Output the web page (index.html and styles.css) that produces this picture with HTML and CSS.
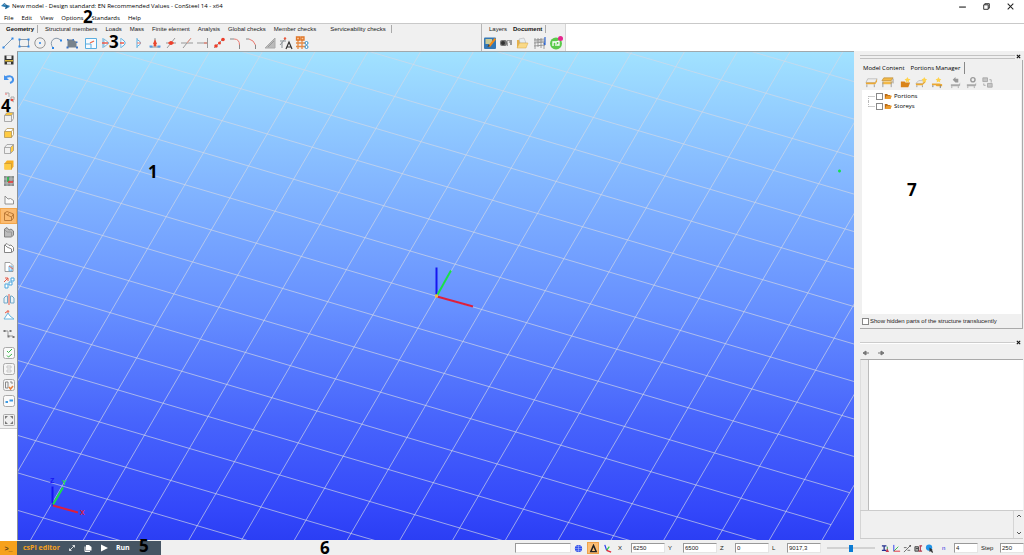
FILE: index.html
```html
<!DOCTYPE html>
<html lang="en">
<head>
<meta charset="utf-8">
<title>New model - ConSteel 14</title>
<link rel="stylesheet" href="styles.css">
</head>
<body>
<div class="app">
  <header class="titlebar">
    <svg class="logo" viewBox="0 0 10 8"><path d="M0 4L4 0.5V2.500L9.500 3.500V5L5 7.500V5.500Z" fill="#2f7fb5"/><path d="M4 1L7 4L5 7" stroke="#1a4c74" fill="none"/></svg>
    <h1 class="title">New model - Design standard: EN Recommended Values - ConSteel 14 - x64</h1>
    <div class="window-buttons">
      <button aria-label="Minimize"><svg viewBox="0 0 8 8"><path d="M1 4.500H7" stroke="#222"/></svg></button>
      <button aria-label="Restore"><svg viewBox="0 0 8 8"><path d="M1.500 2.500H5.500V6.500H1.500ZM2.500 2.500V1.500H6.500V5.500H5.500" fill="none" stroke="#222" stroke-width=".8"/></svg></button>
      <button aria-label="Close"><svg viewBox="0 0 8 8"><path d="M1.500 1.500L6.500 6.500M6.500 1.500L1.500 6.500" stroke="#222" stroke-width=".9"/></svg></button>
    </div>
  </header>
  <nav class="menubar">
    <button>File</button><button>Edit</button><button>View</button><button>Options</button><button>Standards</button><button>Help</button>
    <span class="callout callout-2">2</span>
  </nav>
  <div class="ribbon">
    <section class="ribbon-main">
      <div class="tabs">
        <button class="tab active">Geometry</button><button class="tab">Structural members</button><button class="tab">Loads</button><button class="tab">Mass</button><button class="tab">Finite element</button><button class="tab">Analysis</button><button class="tab">Global checks</button><button class="tab">Member checks</button><button class="tab last">Serviceability checks</button>
      </div>
      <div class="tools">
        <div class="group">
          <button aria-label="Line"><svg viewBox="0 0 14 14"><path d="M3 11L11 3" stroke="#7d98b3"/><path d="M1.500 10.500h2v2h-2zM10.500 1.500h2v2h-2z" fill="#2c86e8"/></svg></button>
          <button aria-label="Rectangle"><svg viewBox="0 0 14 14"><path d="M2.500 3.500H11.500V10.500H2.500Z" fill="none" stroke="#8a9aaa"/><path d="M1.500 2.500h2v2h-2zM10.500 2.500h2v2h-2zM1.500 9.500h2v2h-2zM10.500 9.500h2v2h-2z" fill="#2c86e8"/></svg></button>
          <button aria-label="Circle"><svg viewBox="0 0 14 14"><circle cx="7" cy="7" r="5.200" fill="none" stroke="#8a8a8a" stroke-width=".9"/><circle cx="7" cy="7" r="1" fill="#2c86e8"/></svg></button>
          <button aria-label="Arc"><svg viewBox="0 0 14 14"><path d="M4 12Q0.500 7 4 3.500Q8 0.500 12 4.500" fill="none" stroke="#8a9aaa"/><path d="M3 11h2v2h-2zM11 3.500h2v2h-2z" fill="#2c86e8"/></svg></button>
          <button aria-label="Plate"><svg viewBox="0 0 14 14"><path d="M2.500 3.500H8L11.500 6V11.500H2.500Z" fill="#77828c"/><path d="M2 3h1.500v1.500H2zM7.500 3h1.500v1.500H7.500zM11 5.500h1.500v1.500H11zM1.500 10.500h2v2h-2zM11 10.500h2v2h-2z" fill="#3a75c8"/></svg></button>
        </div>
        <div class="group">
          <button aria-label="Frame"><svg viewBox="0 0 14 14"><path d="M1.500 2.500H12.500V12.500H1.500Z" fill="#f7fbff" stroke="#5aaee0"/><path d="M2 8H7V12M2 8" fill="none" stroke="#5aaee0"/><path d="M6 7L10 5" stroke="#ed6a48" stroke-width="1.300"/></svg></button>
          <button aria-label="Mirror start"><svg viewBox="0 0 14 14"><path d="M3 2V12" stroke="#5aaee0"/><path d="M4 3L9 7L4 11Z" fill="#fff" stroke="#7eb8d8"/><path d="M2 7H8" stroke="#ed5a48" stroke-width="1.500"/></svg></button>
          <button aria-label="Mirror end"><svg viewBox="0 0 14 14"><path d="M5 2V12" stroke="#5aaee0"/><path d="M5.500 3Q13 7 5.500 11" fill="#fff" stroke="#5aaee0"/><path d="M4 7H8" stroke="#ed5a48" stroke-width="1.500"/></svg></button>
          <button aria-label="Half section"><svg viewBox="0 0 14 14"><path d="M5 2V12M5 3.500Q12 7 5 10.500" fill="#fff" stroke="#5aaee0"/><path d="M5 7H9" stroke="#ed7a68"/></svg></button>
        </div>
        <div class="group joined">
          <button aria-label="Split node"><svg viewBox="0 0 14 14"><path d="M2 11H12M7 2V8" stroke="#899"/><path d="M7 3L5 8H9Z" fill="#e9482e"/><path d="M1.500 9.500h3v2h-3zM9.500 9.500h3v2h-3z" fill="#5b9be0"/><circle cx="7" cy="9" r="1.500" fill="#e9482e"/></svg></button>
          <button aria-label="Intersect"><svg viewBox="0 0 14 14"><path d="M2 7H12M3 12L11 2" stroke="#999"/><path d="M4 7H10" stroke="#f06a55" stroke-width="1.500"/><circle cx="7" cy="7" r="2" fill="#ed3d2a"/></svg></button>
          <button aria-label="Trim"><svg viewBox="0 0 14 14"><path d="M1 7H13M3 12L11 2" stroke="#999"/><path d="M7 7L11 2" stroke="#ef9a88"/></svg></button>
          <button aria-label="Extend"><svg viewBox="0 0 14 14"><path d="M1 7H11M11.500 2V12" stroke="#999"/><path d="M8 7H11" stroke="#f06a55"/></svg></button>
          <button aria-label="Divide"><svg viewBox="0 0 14 14"><path d="M2 12L12 2" stroke="#999"/><circle cx="4" cy="10" r="1.800" fill="#ed3d2a"/><circle cx="7.500" cy="7" r="1.500" fill="#ed3d2a"/><circle cx="11" cy="3.500" r="1.800" fill="#ed3d2a"/></svg></button>
          <button aria-label="Fillet"><svg viewBox="0 0 14 14"><path d="M2 3H6M11.500 8V13" stroke="#888"/><path d="M6 3Q11.500 3 11.500 9" fill="none" stroke="#e87a70"/></svg></button>
          <button aria-label="Chamfer"><svg viewBox="0 0 14 14"><path d="M2 3H5M11.500 9V13" stroke="#888"/><path d="M5 3L9 5L11.500 9" fill="none" stroke="#e87a70"/></svg></button>
        </div>
        <div class="group">
          <button aria-label="Slope"><svg viewBox="0 0 14 14"><path d="M2 12L12 2V12Z" fill="#bbb" stroke="#aaa"/><path d="M5 11L11 5" stroke="#999"/></svg></button>
          <button aria-label="Annotate"><svg viewBox="0 0 14 14"><path d="M1 9L6 3M3 12L3 6M1 5H7" stroke="#8b9297"/><circle cx="6" cy="2.500" r="1.200" fill="#e95a40"/><path d="M7 13L10 6L13 13M8 11H12" fill="none" stroke="#333" stroke-width="1.200"/></svg></button>
          <button aria-label="Raster grid"><svg viewBox="0 0 14 14"><path d="M3 4V13M7 4V13M1 7H11M1 10.500H11" stroke="#e58b45" stroke-width="1.300"/><path d="M1.500 1h3v3h-3zM6 1h3v3h-3z" fill="#f8c79c" stroke="#e07628" stroke-width="1.300"/><circle cx="11.500" cy="7" r="1.500" fill="#fff" stroke="#318fcb"/><circle cx="11.500" cy="11" r="1.500" fill="#fff" stroke="#318fcb"/></svg></button>
        </div>
      </div>
      <span class="callout callout-3">3</span>
    </section>
    <section class="ribbon-doc">
      <div class="tabs">
        <button class="tab">Layers</button><button class="tab active">Document</button>
      </div>
      <div class="tools">
        <div class="group">
          <button aria-label="Edit document"><svg viewBox="0 0 14 14"><rect x="1" y="1.500" width="12" height="11.500" rx="1" fill="#3477b4"/><path d="M2.500 3H9V8H2.500Z" fill="#c9ca96"/><path d="M5 10L11.500 2L13 3.500L7 11Z" fill="#f28b18"/><path d="M4.500 11L5.500 8.500L7 10Z" fill="#443"/></svg></button>
          <button aria-label="Snapshot"><svg viewBox="0 0 14 14"><rect x="1" y="4" width="7" height="6" rx="2" fill="#777"/><circle cx="4" cy="7" r="2" fill="#333"/><path d="M8 4H13V9H11V7H9V10H8Z" fill="#999"/><circle cx="9.500" cy="6" r="1" fill="#eee"/></svg></button>
          <button aria-label="Open folder"><svg viewBox="0 0 14 14"><path d="M2 4H6L7 6H11V12H2Z" fill="#e4b04d"/><path d="M4 3L9 2L11 7H5Z" fill="#e7edf2" stroke="#aaa" stroke-width=".5"/><path d="M2 12L4.500 7H13L11 12Z" fill="#f9d988" stroke="#dba941" stroke-width=".5"/></svg></button>
        </div>
        <div class="group">
          <button aria-label="Structure"><svg viewBox="0 0 14 14"><path d="M2 2V13M5 2V11M8 2V12M11 4V13M1 4L12 3M1 7L12 6M1 10L12 9M3 5H10" stroke="#888" stroke-width=".8"/><path d="M12 1V9L11 7" fill="none" stroke="#2c66d5" stroke-width="1.200"/></svg></button>
          <button aria-label="License"><svg viewBox="0 0 14 14"><circle cx="7" cy="7.500" r="6" fill="#5bc94b"/><path d="M4 10V6H7V10M7 6L10 5V9H8" fill="none" stroke="#fff" stroke-width="1.300"/><circle cx="11.500" cy="2.500" r="2.500" fill="#e5258e"/></svg></button>
        </div>
      </div>
    </section>
  </div>

  <main class="workspace">
    <aside class="sidebar">
      <div class="side-tools">
        <div class="side-group">
          <button aria-label="Save"><svg viewBox="0 0 14 14"><path d="M2.500 2.500H11.500V11.500H2.500Z" fill="#333"/><path d="M4.500 2.500H9.500V6H4.500Z" fill="#eee"/><path d="M3 7H11V8.500H3Z" fill="#d9b536"/><path d="M5 9H9V11.500H5Z" fill="#ddd"/></svg></button>
        </div>
        <div class="side-group">
          <button aria-label="Undo"><svg viewBox="0 0 14 14"><path d="M3 5.500Q10 2.500 11 7Q11.500 10 8 11" fill="none" stroke="#4492ec" stroke-width="2"/><path d="M2 3V8H7Z" fill="#4492ec"/></svg></button>
        </div>
        <div class="side-group">
          <button aria-label="Snap"><svg viewBox="0 0 14 14"><path d="M3 2H7V6M7 8L12 11M9 6H12V9H9Z" fill="none" stroke="#aaa"/><circle cx="10" cy="9" r="1.300" fill="#e95044"/><circle cx="4" cy="3" r="1" fill="#e99"/></svg></button>
        </div>
        <div class="side-group">
          <button aria-label="Wireframe top"><svg viewBox="0 0 14 14"><path d="M2.500 5.500L5 2.500H11.500L9.500 5.500Z" fill="#fbc53c"/><path d="M2.500 5.500H9.500V11.500H2.500ZM2.500 5.500L5 2.500H11.500V8.500L9.500 11.500M9.500 5.500L11.500 2.500" fill="none" stroke="#999" stroke-width=".8"/></svg></button>
          <button aria-label="Front view"><svg viewBox="0 0 14 14"><path d="M2.500 5.500L5 2.500H11.500V8.500L9.500 11.500H2.500Z" fill="#fff"/><path d="M2.500 5.500H9.500V11.500H2.500Z" fill="#ffcb42"/><path d="M2.500 5.500H9.500V11.500H2.500ZM2.500 5.500L5 2.500H11.500V8.500L9.500 11.500M9.500 5.500L11.500 2.500" fill="none" stroke="#b39453" stroke-width=".8"/></svg></button>
          <button aria-label="Side view"><svg viewBox="0 0 14 14"><path d="M8.500 5.500L11.500 2.500V8.500L8.500 11.500Z" fill="#ffcb42"/><path d="M2.500 5.500H8.500V11.500H2.500ZM2.500 5.500L5 2.500H11.500V8.500L8.500 11.500M8.500 5.500L11.500 2.500" fill="none" stroke="#999" stroke-width=".8"/></svg></button>
          <button aria-label="Solid view"><svg viewBox="0 0 14 14"><path d="M2.500 5.500L5 2.500H11.500V8.500L9.500 11.500H2.500Z" fill="#f6ae22"/><path d="M2.500 5.500H9.500V11.500H2.500Z" fill="#ffcb42"/><path d="M2.500 5.500H9.500V11.500" fill="none" stroke="#c99a3a" stroke-width=".8"/></svg></button>
          <button aria-label="Work plane"><svg viewBox="0 0 14 14"><path d="M2 2H12V12H2Z" fill="#8b9190"/><path d="M2 5H12M2 9H12M5 2V12M9 2V12" stroke="#c5c8c8" stroke-width=".7"/><path d="M6 3V8" stroke="#18b83c" stroke-width="1.500"/><path d="M6 8H11" stroke="#e33" stroke-width="1.500"/></svg></button>
        </div>
        <div class="side-group">
          <button aria-label="Outline"><svg viewBox="0 0 14 14"><path d="M3 3V11H11.500V7.500L8.500 5.500L6 6Z" fill="#fafafa" stroke="#888" stroke-width=".9"/></svg></button>
          <button class="on" aria-label="Hidden line"><svg viewBox="0 0 14 14"><path d="M2.500 4V11.500H9.500V8L5 6ZM2.500 4L5 2.500L11.500 5V9L9.500 11.500M5 6L7 4.500M9.500 8L11.500 5" fill="none" stroke="#b67432" stroke-width=".9"/></svg></button>
          <button aria-label="Shaded"><svg viewBox="0 0 14 14"><path d="M2.500 4L5 2.500L7 5L9 4L11.500 6V10L9.500 12H2.500Z" fill="#bbb" stroke="#777" stroke-width=".9"/><path d="M3 5L5 7H9.500V12" fill="none" stroke="#999"/></svg></button>
          <button aria-label="Solid outline"><svg viewBox="0 0 14 14"><path d="M2.500 4L5 2.500L7 4.500L9 4L11.500 6.500V10L9.500 11.500H2.500ZM3 4L5 6L9.500 8V11" fill="#fff" stroke="#777" stroke-width=".9"/></svg></button>
        </div>
        <div class="side-group">
          <button aria-label="Copy"><svg viewBox="0 0 14 14"><path d="M3 2.500H8L11 5.500V11.500H3Z" fill="#fff" stroke="#888" stroke-width=".8"/><path d="M7 11V6H10V11Z" fill="#cfe6f8" stroke="#5baee3" stroke-width=".8"/><path d="M7 6L11 9" stroke="#e86a55"/></svg></button>
          <button aria-label="Rotate"><svg viewBox="0 0 14 14"><path d="M3 8H6V12H3ZM7 6H10V9H7ZM9 2H12V5H9Z" fill="#fff" stroke="#4ba6df"/><path d="M2 6L6 2M6 2V5M6 2H3" stroke="#e65a48"/></svg></button>
          <button aria-label="Mirror"><svg viewBox="0 0 14 14"><path d="M2 11V6L4 4H5.500V11ZM12 11V6L10 4H8.500V11Z" fill="#e8f2f8" stroke="#72a8c8"/><path d="M7 2V13" stroke="#e65a48"/></svg></button>
          <button aria-label="Scale"><svg viewBox="0 0 14 14"><path d="M2 11L6 5L8 8L12 11Z" fill="#fff" stroke="#69b5df"/><path d="M3 5L6 3" stroke="#e65a48"/><circle cx="6" cy="3.500" r="1.300" fill="#e87967"/></svg></button>
        </div>
        <div class="side-group">
          <button aria-label="Path"><svg viewBox="0 0 14 14"><path d="M3 4H6V9H11" fill="none" stroke="#999"/><path d="M1.500 3h2v2h-2zM7.500 3h2v2h-2zM10.500 9h2v2h-2zM5.500 8.500h2v2h-2z" fill="#777"/></svg></button>
        </div>
        <div class="side-group">
          <button aria-label="Accept"><svg viewBox="0 0 14 14"><rect x="1.500" y="1.500" width="11" height="11" rx="2" fill="#fafafa" stroke="#aaa"/><path d="M5 5L6.500 6.500L10 3M5 9.500L6.500 11L10 8" fill="none" stroke="#39b649"/></svg></button>
          <button aria-label="Clear"><svg viewBox="0 0 14 14"><rect x="1.500" y="1.500" width="11" height="11" rx="2" fill="#f5f5f5" stroke="#aaa"/><path d="M5 4H9V6H5ZM5 8H9V10H5Z" fill="none" stroke="#c7c7c7"/></svg></button>
          <button aria-label="Filter"><svg viewBox="0 0 14 14"><rect x="1.500" y="1.500" width="11" height="11" rx="2" fill="#f5f5f5" stroke="#aaa"/><path d="M3.500 4H6V10H3.500ZM8 4H10V6" fill="none" stroke="#888"/><path d="M7 9L8.500 11L11 8" fill="none" stroke="#e8813c" stroke-width="1.500"/></svg></button>
          <button aria-label="Replace"><svg viewBox="0 0 14 14"><rect x="1.500" y="1.500" width="11" height="11" rx="2" fill="#fafafa" stroke="#aaa"/><path d="M3.500 8H6M7.500 6.500H11" stroke="#3c9ae2" stroke-width="2"/></svg></button>
        </div>
        <div class="side-group">
          <button aria-label="Zoom extents"><svg viewBox="0 0 14 14"><rect x="1.500" y="1.500" width="11" height="11" rx="1" fill="#eee" stroke="#aaa"/><path d="M3 3h3l-3 3zM11 3v3l-3-3zM3 11v-3l3 3zM11 11h-3l3-3z" fill="#777"/></svg></button>
        </div>
      </div>
      <span class="callout callout-4">4</span>
    </aside>

    <section class="viewport">
      <svg class="scene" viewBox="0 0 836 489" preserveAspectRatio="xMidYMid slice">
        <g transform="matrix(45.050 13.250 18.650 -32 418.500 244.700)">
          <path class="grid-line" d="M-10 -10V10M-9 -10V10M-8 -10V10M-7 -10V10M-6 -10V10M-5 -10V10M-4 -10V10M-3 -10V10M-2 -10V10M-1 -10V10M0 -10V10M1 -10V10M2 -10V10M3 -10V10M4 -10V10M5 -10V10M6 -10V10M7 -10V10M8 -10V10M9 -10V10M10 -10V10"/>
          <path class="grid-line" d="M-10 -10H10M-10 -9H10M-10 -8H10M-10 -7H10M-10 -6H10M-10 -5H10M-10 -4H10M-10 -3H10M-10 -2H10M-10 -1H10M-10 0H10M-10 1H10M-10 2H10M-10 3H10M-10 4H10M-10 5H10M-10 6H10M-10 7H10M-10 8H10M-10 9H10M-10 10H10"/>
        </g>
        <path class="axis-z" d="M418.500 243V216"/>
        <path class="axis-y" d="M419 244L433 219"/>
        <path class="axis-x" d="M419 245L455 255"/>
        <rect x="417" y="243" width="3" height="3" fill="#f4b942"/>
        <path class="axis-z" d="M34.500 454V435"/>
        <path class="axis-y" d="M35 453L45 436"/>
        <path class="axis-x" d="M35 454L60 461"/>
        <text class="axis-name name-z" x="32" y="431">Z</text>
        <text class="axis-name name-y" x="44" y="433">Y</text>
        <text class="axis-name name-x" x="62" y="463">X</text>
        <path d="M820 119.500H823M821.500 118V121" stroke="#16e04a" stroke-width="1.500"/>
      </svg>
      <span class="callout callout-1">1</span>
    </section>

    <aside class="docks">
      <section class="dock dock-top">
        <div class="grip double"><i></i><button aria-label="Close panel"><svg viewBox="0 0 6 6"><path d="M1 1L5 5M5 1L1 5" stroke="#111" stroke-width="1.300"/></svg></button></div>
        <div class="panel">
          <div class="dock-tabs"><button>Model Content</button><button class="current">Portions Manager</button></div>
          <div class="dock-tools">
            <button aria-label="Show portion"><svg viewBox="0 0 14 14"><path d="M3 3H13L11 7H1Z" fill="#eee" stroke="#aaa" stroke-width=".7"/><path d="M1 7H11L13 3V6L11 9H1Z" fill="#eba832"/><path d="M2 9V12M10 9V12" stroke="#999"/></svg></button>
            <button aria-label="Show all"><svg viewBox="0 0 14 14"><path d="M3 2H13L11 5H1Z" fill="#f3b947" stroke="#b98a34" stroke-width=".7"/><path d="M2 6H13L11 9H1Z" fill="#f3b947"/><path d="M2 6V12M11 6V12M13 3V8" stroke="#999"/></svg></button>
            <button class="gap" aria-label="New folder"><svg viewBox="0 0 14 14"><path d="M2 6H6L7 7H12L10 12H2Z" fill="#d98419"/><path d="M9 1L10 3L12.500 3.500L10.500 5L11 7L9 6L7 7L7.500 5L6 3.500L8 3Z" fill="#ffd34e"/></svg></button>
            <button aria-label="New portion"><svg viewBox="0 0 14 14"><path d="M1 8L4 5H11L8 8Z" fill="#eee" stroke="#aaa" stroke-width=".7"/><path d="M1 8H8L11 5V7L8 10H1Z" fill="#eba832"/><path d="M2 10V12M8 10V12" stroke="#999"/><path d="M10 1L11 3L13 3.500L11.500 5L12 7L10 6L8 7L8.500 5L7 3.500L9 3Z" fill="#ffd34e"/></svg></button>
            <button aria-label="New storey"><svg viewBox="0 0 14 14"><path d="M1 8H9L12 9V11H6L5 10H1Z" fill="#eba832"/><path d="M2 10V12M10 10V13" stroke="#777"/><path d="M8 1L9 3L11 3.500L9.500 5L10 7L8 6L6 7L6.500 5L5 3.500L7 3Z" fill="#ffd34e"/></svg></button>
            <button class="gap" aria-label="Restore portion"><svg viewBox="0 0 14 14"><path d="M2 9H11L12 7V10L11 11H2Z" fill="#aaa"/><path d="M4 4L7 1V3H10V7H7V5V7Z" fill="#999"/><path d="M3 11V13M10 11V13" stroke="#aaa"/></svg></button>
            <button aria-label="Portion settings"><svg viewBox="0 0 14 14"><path d="M2 9H11L12 7V10L11 11H2Z" fill="#aaa"/><circle cx="8.500" cy="4" r="2.300" fill="none" stroke="#999" stroke-width="1.500"/><path d="M3 11V13M10 11V13" stroke="#aaa"/></svg></button>
            <button aria-label="Arrange"><svg viewBox="0 0 14 14"><path d="M2 2H7V6H2ZM7 8H12V12H7Z" fill="#c5c5c5" stroke="#aaa"/><path d="M9 4H11V7M3 8V10H5" fill="none" stroke="#aaa"/></svg></button>
          </div>
          <ul class="tree">
            <li><label><input type="checkbox"><svg viewBox="0 0 10 8"><path d="M1 1H4L5 2H8V7H1Z" fill="#b96a15"/><path d="M1 7L3 3H10L8 7Z" fill="#ea9a2e"/></svg>Portions</label></li>
            <li><label><input type="checkbox"><svg viewBox="0 0 10 8"><path d="M1 1H4L5 2H8V7H1Z" fill="#b96a15"/><path d="M1 7L3 3H10L8 7Z" fill="#ea9a2e"/></svg>Storeys</label></li>
          </ul>
          <label class="show-hidden"><input type="checkbox">Show hidden parts of the structure translucently</label>
          <span class="callout callout-7">7</span>
        </div>
      </section>
      <section class="dock dock-bottom">
        <div class="grip"><i></i><button aria-label="Close panel"><svg viewBox="0 0 6 6"><path d="M1 1L5 5M5 1L1 5" stroke="#111" stroke-width="1.300"/></svg></button></div>
        <div class="history">
          <button aria-label="Back"><svg viewBox="0 0 8 8"><path d="M1 4L4 2V6ZM3 4H7" fill="#777" stroke="#777"/></svg></button>
          <button aria-label="Forward"><svg viewBox="0 0 8 8"><path d="M7 4L4 2V6ZM5 4H1" fill="#777" stroke="#777"/></svg></button>
        </div>
        <div class="properties"></div>
        <div class="message">
          <div class="message-text"></div>
          <div class="scroller">
            <button aria-label="Scroll up"><svg viewBox="0 0 6 6"><path d="M1 4L3 2L5 4" fill="none" stroke="#555"/></svg></button>
            <button aria-label="Scroll down"><svg viewBox="0 0 6 6"><path d="M1 2L3 4L5 2" fill="none" stroke="#555"/></svg></button>
          </div>
        </div>
      </section>
    </aside>
  </main>

  <footer class="statusbar">
    <button class="console">&gt;_</button>
    <div class="editor">
      <span class="editor-name">csPI editor</span>
      <button aria-label="Expand"><svg viewBox="0 0 8 8"><path d="M1.500 6.500L6.500 1.500M4.500 1.500H6.500V3.500M1.500 4.500V6.500H3.500" fill="none" stroke="#fff" stroke-width=".8"/></svg></button>
      <button aria-label="Open script"><svg viewBox="0 0 8 8"><path d="M2 1H5L7.500 3V6.500H2Z" fill="#fff"/><path d="M1 2.500V7.500H6" fill="none" stroke="#fff"/></svg></button>
      <button aria-label="Play"><svg viewBox="0 0 8 8"><path d="M1 0.500L8 4L1 7.500Z" fill="#fff"/></svg></button>
      <button class="run">Run</button>
      <span class="callout callout-5">5</span>
    </div>
    <div class="hint"><span class="callout callout-6">6</span></div>
    <div class="coords">
      <input class="command" type="text" aria-label="Command">
      <button aria-label="Global"><svg viewBox="0 0 10 10"><circle cx="5" cy="5" r="4" fill="#2444e8"/><path d="M1 5H9M5 1V9M2 3H8M2 7H8" stroke="#b6c6ff" stroke-width=".6"/></svg></button>
      <button class="delta" aria-label="Relative"><svg viewBox="0 0 10 10"><path d="M2 8.500H8L5 1.500Z" fill="none" stroke="#222" stroke-width="1.600"/></svg></button>
      <button aria-label="Axes"><svg viewBox="0 0 10 10"><path d="M2 1L4 7" stroke="#2337ee" stroke-width="1.300"/><path d="M4 7L7 3" stroke="#26c946" stroke-width="1.300"/><path d="M4 7L9 9" stroke="#e32636" stroke-width="1.500"/></svg></button>
      <label for="cx">X</label><input id="cx" type="text" value="6250">
      <label for="cy">Y</label><input id="cy" type="text" value="6500">
      <label for="cz">Z</label><input id="cz" type="text" value="0">
      <label for="cl">L</label><input id="cl" type="text" value="9017,3">
      <input class="zoom" type="range" min="0" max="100" value="50" aria-label="Zoom">
      <div class="snaps">
        <button aria-label="Section snap"><svg viewBox="0 0 10 10"><path d="M1 2H6M3.500 2V7M1 7H6" stroke="#23308f" stroke-width="1.400"/><path d="M7 3V7" stroke="#2a9b48"/><path d="M5 9L7 5L9 9Z" fill="#c83a54"/></svg></button>
        <button aria-label="Local axes"><svg viewBox="0 0 10 10"><path d="M2 1V8" stroke="#2337ee"/><path d="M2 8L7 3" stroke="#26b946"/><path d="M2 8H9" stroke="#e32636"/></svg></button>
        <button aria-label="Line snap"><svg viewBox="0 0 10 10"><path d="M1 9L8 2M1 4H4M5 7H8" stroke="#666"/><circle cx="8" cy="2" r="1" fill="#444"/></svg></button>
        <button aria-label="Model snap"><svg viewBox="0 0 10 10"><path d="M1 3H5V8H1ZM2 5H5" fill="#aaa" stroke="#444"/><path d="M7 2V8M5 8H9M6 2H9" stroke="#b3364a" stroke-width="1.300"/></svg></button>
        <button aria-label="Pick"><svg viewBox="0 0 10 10"><circle cx="4.500" cy="4" r="3.500" fill="#2395e8"/><path d="M5 4V9L6.500 8L8 10L9 9L7.500 7H9Z" fill="#333"/></svg></button>
      </div>
      <label class="count" for="n">n</label><input id="n" class="narrow" type="text" value="4">
      <label class="step" for="step">Step</label><input id="step" class="narrow" type="text" value="250">
    </div>
  </footer>
</div>
</body>
</html>
```

FILE: styles.css
```css
* { box-sizing: border-box; }
body {
  margin: 0;
  font: 6px/8px "Liberation Sans", Arial, sans-serif;
  color: #222;
  background: #fff;
}
button {
  display: flex;
  align-items: center;
  justify-content: center;
  flex: none;
  padding: 0;
  border: 0;
  background: none;
  color: inherit;
  font: inherit;
  white-space: nowrap;
}
svg { display: block; flex: none; }
.app { display: flex; flex-direction: column; height: 100vh; }

/* Title and menu */
.titlebar, .menubar, .dock-tabs, .tree { font: 6px/8px "Open Sans", sans-serif; color: #000; }
.titlebar { display: flex; align-items: center; height: 12px; padding: 0 9px 0 1px; gap: 2px; }
.logo { width: 9px; height: 8px; }
.title { margin: 0; font: inherit; }
.window-buttons { display: flex; gap: 15px; margin-left: auto; }
.window-buttons svg { width: 9px; height: 9px; }
.menubar { position: relative; display: flex; align-items: center; height: 11px; padding-left: 4px; gap: 8px; }

/* Ribbon */
.ribbon { display: flex; height: 28px; border-top: 1px solid #c9c9c9; }
.ribbon-main { position: relative; flex: 0 1 482px; background: #f0f0f0; border-right: 1px solid #b5b5b5; }
.ribbon-doc { background: #f0f0f0; border-right: 1px solid #d5d5d5; padding-right: 1px; }
.tabs { display: flex; align-items: center; height: 12px; padding: 0 0 2px 1px; }
.tab { height: 8px; padding: 0 4px; }
.ribbon-doc .tab { padding-left: 6px; }
.tab.active { font-weight: bold; color: #111; padding: 0 3px 0 5px; border-right: 1px solid #aaa; margin-right: 3px; }
.ribbon-doc .tab.active { padding-left: 2px; }
.tab.last { padding: 0 5px 0 10px; border-right: 1px solid #aaa; }
.tools { display: flex; height: 14px; gap: 3px; }
.ribbon-doc .tools { gap: 2px; }
.group { display: flex; }
.group.joined { margin-left: -3px; }
.group button { width: 16px; height: 14px; }
.group svg { width: 14px; height: 14px; }

/* Workspace */
.workspace { display: flex; flex: 1; min-height: 0; background: #f0f0f0; }
.sidebar { position: relative; flex: none; width: 17px; background: #fff; }
.side-tools { display: flex; flex-direction: column; gap: 3px; padding: 1px 0 0; background: #f0f0f0; border-bottom: 1px solid #ccc; }
.side-group button { width: 17px; height: 16px; }
.side-group svg { width: 14px; height: 14px; }
.side-group .on { background: #fbbb70; outline: 1px solid #f3a64c; outline-offset: -1px; }
.viewport {
  position: relative;
  flex: 1;
  min-width: 0;
  margin-bottom: 1px;
  border-top: 1px solid #a0a8ac;
  border-left: 1px solid #8c9298;
  background: linear-gradient(#a1e2ff 0%, #85b9ff 25%, #668fff 53%, #4865fc 75%, #3347fa 94%, #2b3ef4 100%);
  overflow: hidden;
}
.scene { width: 100%; height: 100%; }
.grid-line { fill: none; stroke: rgba(213, 217, 229, .66); stroke-width: 1px; vector-effect: non-scaling-stroke; }
.axis-x, .axis-y, .axis-z { fill: none; stroke-width: 2px; }
.axis-x { stroke: #dd1f3d; }
.axis-y { stroke: #18e047; }
.axis-z { stroke: #1616f0; }
.axis-name { font: bold 7px "Liberation Sans", Arial, sans-serif; }
.name-x { fill: #dd1f3d; }
.name-y { fill: #18e047; }
.name-z { fill: #1616f0; }

/* Docked panels */
.docks { display: flex; flex-direction: column; flex: 0 0 170px; padding: 2px 1px 2px 6px; }
.dock { display: flex; flex-direction: column; min-height: 0; }
.dock-top { flex: 286 1 0; }
.dock-bottom { flex: 200 1 0; }
.grip { display: flex; align-items: center; height: 7px; flex: none; gap: 1px; padding-right: 2px; }
.grip i { flex: 1; height: 2px; background: #ccc; border-bottom: 1px solid #fff; }
.grip.double i { height: 4px; background: none; border: 1px solid #c2c2c2; border-width: 1px 0; }
.grip svg { width: 5px; height: 5px; }
.panel { position: relative; display: flex; flex-direction: column; flex: 1; min-height: 0; margin-bottom: 10px; padding: 2px 1px 0 2px; border: 1px solid #aaa; border-width: 0 1px 1px 0; }
.dock-tabs { display: flex; align-items: center; height: 12px; gap: 6px; padding-left: 1px; }
.dock-tabs .current { padding-right: 4px; border-right: 1px solid #888; height: 12px; }
.dock-tools { display: flex; align-items: center; height: 16px; padding: 2px 0; }
.dock-tools button { width: 16px; padding-left: 2px; }
.dock-tools .gap { margin-left: 2px; }
.dock-tools svg { width: 13px; height: 13px; }
.tree { position: relative; flex: 1; margin: 0; padding: 1px 0 0 6px; list-style: none; background: #fff; }
.tree li { display: flex; align-items: center; height: 10px; }
.tree li::before { content: ""; width: 7px; height: 10px; border-left: 1px dotted #bbb; background: linear-gradient(#ccc, #ccc) 0 5px / 6px 1px no-repeat; }
.tree li:first-child::before { height: 5px; align-self: flex-end; background-position: 0 0; }
.tree li:last-child::before { height: 6px; align-self: flex-start; }
.tree label, .show-hidden { display: flex; align-items: center; gap: 1px; }
.tree svg { width: 8px; height: 7px; margin-right: 1px; }
input[type="checkbox"] { appearance: none; flex: none; width: 7px; height: 7px; margin: 0; border: 1px solid #888; background: #fff; }
.show-hidden { height: 14px; white-space: nowrap; }
.history { display: flex; align-items: center; flex: none; height: 13px; padding-left: 2px; gap: 7px; }
.history svg { width: 8px; height: 8px; }
.properties { flex: 153 1 0; border-top: 1px solid #aaa; border-left: 1px solid #ddd; background: linear-gradient(90deg, #ececec 7px, #bbb 7px, #bbb 8px, #fff 8px); }
.message { display: flex; flex: 27 1 0; border: 1px solid #ccc; border-width: 1px 0; }
.message-text { flex: 1; border: 1px solid #d5d5d5; border-width: 0 1px; }
.scroller { display: flex; flex-direction: column; justify-content: space-between; width: 9px; padding: 2px 0; align-items: center; }
.scroller svg { width: 6px; height: 6px; }

/* Status bar */
.statusbar { display: flex; flex: none; height: 14px; background: #f0f0f0; }
.console { width: 17px; background: #f6a11c; color: #553d18; font: bold 7px/9px "Liberation Sans", Arial, sans-serif; }
.editor { position: relative; display: flex; align-items: center; flex: 0 0 144px; padding-left: 6px; gap: 8px; background: #465563; color: #fff; font: bold 7px/10px "Open Sans", sans-serif; }
.editor-name { color: #f6a11c; }
.editor svg { width: 8px; height: 8px; }
.hint { position: relative; flex: 1; }
.coords { display: flex; align-items: center; flex: none; }
.coords button { width: 15px; height: 12px; }
.coords svg { width: 9px; height: 9px; }
.coords .delta { width: 12px; background: #fbbd73; border: 1px solid #efa24b; margin: 0 1px; }
.coords label { width: 18px; padding-left: 3px; }
.coords label[for="cx"] { width: 16px; }
.coords input[type="text"] {
  width: 34px;
  height: 10px;
  padding: 0 1px;
  border: 1px solid #ddd;
  border-color: #999 #e5e5e5 #e5e5e5 #999;
  background: #fff;
  color: #222;
  font: inherit;
}
.coords input.command { width: 56px; }
.coords input.narrow { width: 24px; }
.coords .count { width: 19px; padding-left: 7px; color: #2020e0; }
.coords .step { width: 22px; }
.zoom { appearance: none; width: 48px; height: 10px; margin: 0 5px 0 6px; background: linear-gradient(#d2d2d2, #d2d2d2) 0 4px / 100% 2px no-repeat; }
.zoom::-webkit-slider-thumb { appearance: none; width: 4px; height: 7px; background: #0b7bd4; }
.snaps { display: flex; }
.snaps button { width: 11px; }

/* Numbered callouts */
.callout { position: absolute; z-index: 2; font: bold 17px/18px "Open Sans", sans-serif; color: #000; pointer-events: none; }
.callout-1 { left: 130px; top: 111px; }
.callout-2 { left: 83px; top: -4px; }
.callout-3 { left: 109px; top: 9px; }
.callout-4 { left: 1px; top: 46px; }
.callout-5 { left: 122px; top: -4px; }
.callout-6 { left: 159px; top: -2px; }
.callout-7 { left: 47px; top: 121px; }
```
